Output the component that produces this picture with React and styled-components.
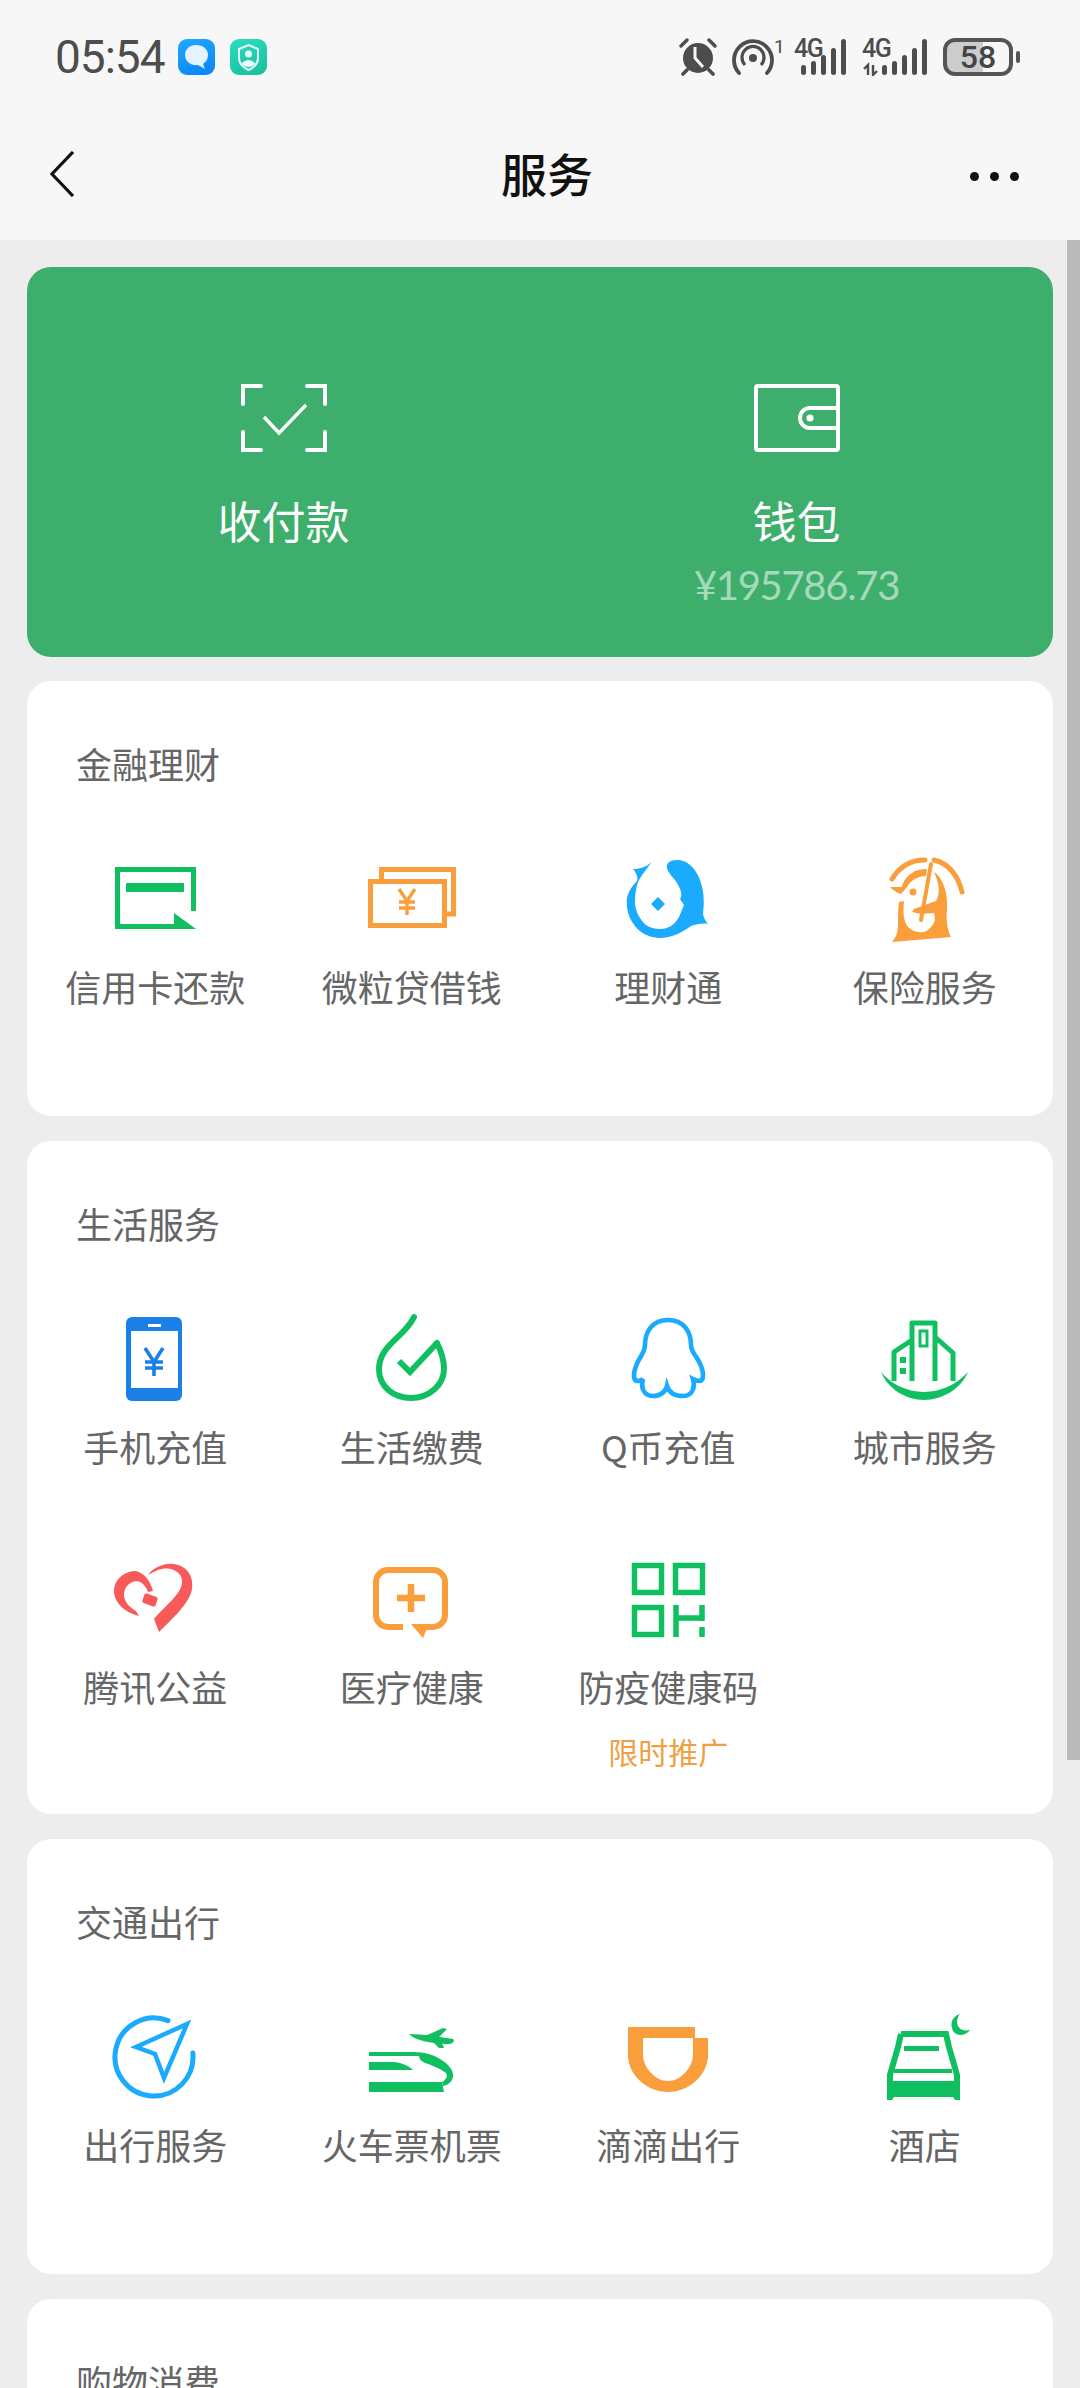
import React from "react";
import styled, { createGlobalStyle } from "styled-components";

const GREEN = "#0fbf60";
const ORANGE = "#f99e3a";
const BLUE = "#1aabff";

const CreditIcon = () => (
  <IconSvg viewBox="0 0 100 100">
    <path d="M89.5 62V20.5H13.5V77.5H70" fill="none" stroke={GREEN} strokeWidth="5" />
    <rect x="22" y="34" width="58" height="9" fill={GREEN} />
    <path d="M70 64L92 80H70Z" fill={GREEN} />
  </IconSvg>
);

const LoanIcon = () => (
  <IconSvg viewBox="0 0 100 100">
    <path d="M20.5 30V20.5H92.5V65H86" fill="none" stroke={ORANGE} strokeWidth="5" />
    <rect x="9.5" y="32.5" width="74" height="44" fill="none" stroke={ORANGE} strokeWidth="5" />
    <path d="M38 40L46 52L54 40M46 52V66M38 53H54M38 59H54" fill="none" stroke={ORANGE} strokeWidth="3.4" />
  </IconSvg>
);

const FishIcon = () => (
  <IconSvg viewBox="0 0 100 100">
    <path
      d="M34.7 13C28 19 22 20 16 20C20 25 21 28 20 32C14 38 9.7 45 9.7 53C9.7 74 25 89 43 89C56 89 67 82 74 77C80 75 86 74 91 75C88 71 86 68 86 64C90 40 80 11 60 11C53 11 49 14 50 19C51 24 56 28 60 34C65 42 65 48 63 50L67 56L62 68C57 77 50 80 43 80C35 80 29 77 26 73C21 67 18 60 18 53C18 45 19 39 21 33C25 25 30 20 34.7 13Z"
      fill={BLUE}
    />
    <path d="M41 48L48 55L41 62L34 55Z" fill={BLUE} />
  </IconSvg>
);

const InsuranceIcon = () => (
  <IconSvg viewBox="0 0 100 100">
    <path d="M18 30C26 17 38 11 51 11" fill="none" stroke={ORANGE} strokeWidth="5" strokeLinecap="round" />
    <path d="M60 11C74 14 84 26 88 43" fill="none" stroke={ORANGE} strokeWidth="5" strokeLinecap="round" />
    <path d="M16 38H28C29 32 33 27 38 24C42 21 47 20 53 20L52 27C44 27 37 31 33 38L27 45C23 44 19 41 16 38Z" fill={ORANGE} />
    <circle cx="39" cy="43" r="3.4" fill={ORANGE} />
    <path d="M57 15L47 71" stroke={ORANGE} strokeWidth="4" strokeLinecap="round" />
    <path
      d="M60 23C68 28 74 42 73 60C72 70 73 80 77 88L18 93C22 88 24 84 24 76C24 68 24 60 25 53L30 52C29 62 29 72 34 78C40 84 50 85 55 80C61 75 62 70 60 64L47 65L38 63L40 60L62 52C66 46 66 36 60 23Z"
      fill={ORANGE}
    />
  </IconSvg>
);

const PhoneIcon = () => (
  <IconSvg viewBox="0 0 100 100">
    <rect x="22" y="8" width="56" height="84" rx="6" fill="#1b7fe8" />
    <rect x="27" y="22" width="47" height="57" fill="#fff" />
    <rect x="44" y="15" width="13" height="3" fill="#fff" />
    <path d="M41 39L50 53L59 39M50 53V67M41 53H59M41 59H59" fill="none" stroke="#1b7fe8" strokeWidth="3.6" />
  </IconSvg>
);

const BillIcon = () => (
  <IconSvg viewBox="0 0 100 100">
    <path
      d="M53 8C44 28 18 36 18 60C18 78 33 89 50 89C68 89 83 76 83 60C83 50 80 42 76 34"
      fill="none"
      stroke={GREEN}
      strokeWidth="6"
      strokeLinecap="round"
    />
    <path d="M38 52L49 63L76 34" fill="none" stroke={GREEN} strokeWidth="6" />
  </IconSvg>
);

const PenguinIcon = () => (
  <IconSvg viewBox="0 0 100 100">
    <path
      d="M51 11C35 11 28 23 28 36C28 44 22 48 19 57C16 65 16 72 21 72C23 72 25 71 26 70C24 76 25 87 36 87C44 87 49 82 50 77C52 83 57 87 66 87C77 87 78 76 76 70C78 71 80 72 82 72C87 72 87 65 84 57C81 48 74 44 74 36C74 23 67 11 51 11Z"
      fill="none"
      stroke={BLUE}
      strokeWidth="4.6"
    />
  </IconSvg>
);

const CityIcon = () => (
  <IconSvg viewBox="0 0 100 100">
    <path d="M7 63C14 80 32 91 50 91C68 91 87 80 94 63C84 74 68 83 50 83C32 83 16 74 7 63Z" fill={GREEN} />
    <path d="M20 72V43L38 31M38 72V14H61V72M61 28L79 44V72" fill="none" stroke={GREEN} strokeWidth="5" strokeLinejoin="round" />
    <rect x="46" y="22" width="7" height="15" fill="none" stroke={GREEN} strokeWidth="3" />
    <rect x="26" y="48" width="6" height="6" fill={GREEN} />
    <rect x="26" y="59" width="6" height="6" fill={GREEN} />
  </IconSvg>
);

const HeartIcon = () => (
  <IconSvg viewBox="0 0 100 100">
    <path
      d="M44 26C50 18 60 14 70 15C82 17 90 26 88 40C86 54 68 70 55 83L50 70C60 58 76 46 78 35C80 24 68 18 58 20C52 21 48 24 44 26Z"
      fill="#f85a5a"
    />
    <path
      d="M49 42C46 30 38 22 30 22C18 23 10 32 10 42C10 54 22 64 35 67L32 62C24 58 19 50 20 44C21 36 28 32 33 32C38 33 42 37 44 43Z"
      fill="#f85a5a"
    />
    <rect x="39" y="46" width="14" height="10" rx="2" transform="rotate(20 46 51)" fill="#f85a5a" />
  </IconSvg>
);

const MedicalIcon = () => (
  <IconSvg viewBox="0 0 100 100">
    <path
      d="M42 78H27A12 12 0 0 1 15 66V33A12 12 0 0 1 27 21H72A12 12 0 0 1 84 33V66A12 12 0 0 1 72 78H66"
      fill="none"
      stroke={ORANGE}
      strokeWidth="6"
    />
    <path d="M50 75H68L62 89Z" fill={ORANGE} />
    <path d="M36 49H64M50 35V63" stroke={ORANGE} strokeWidth="6.5" />
  </IconSvg>
);

const HealthCodeIcon = () => (
  <IconSvg viewBox="0 0 100 100">
    <g fill="none" stroke={GREEN} strokeWidth="5.5">
      <rect x="17.5" y="16.5" width="27" height="27" />
      <rect x="58.5" y="16.5" width="27" height="27" />
      <rect x="17.5" y="58.5" width="27" height="27" />
      <path d="M59 56V88M85 56V72M59 69H85M85 78V88" />
    </g>
  </IconSvg>
);

const CompassIcon = () => (
  <IconSvg viewBox="0 0 100 100">
    <path d="M64 13.6A39 39 0 1 0 88.8 46" fill="none" stroke={BLUE} strokeWidth="5" strokeLinecap="round" />
    <path d="M83 17L32 40L51 47L60 71Z" fill="none" stroke={BLUE} strokeWidth="4.5" />
  </IconSvg>
);

const TrainIcon = () => (
  <IconSvg viewBox="0 0 100 100">
    <path d="M48 27C60 27 80 30 92 32C95 35 90 38 84 37C70 36 55 34 48 27Z" fill={GREEN} />
    <path d="M64 29L82 21L86 22L76 32ZM70 33L78 41L83 41L80 34Z" fill={GREEN} />
    <path
      d="M8 45H52C64 45 74 48 82 54C88 58 93 64 92 70C91 75 87 78 82 79L81 75C85 73 87 69 85 66C80 62 70 58 64 56C60 54 58 52 58 49H8Z"
      fill={GREEN}
    />
    <path d="M8 55H33C42 56 48 59 52 63H8Z" fill={GREEN} />
    <path d="M8 75H81L83 85H8Z" fill={GREEN} />
  </IconSvg>
);

const DidiIcon = () => (
  <IconSvg viewBox="0 0 100 100">
    <path
      fillRule="evenodd"
      d="M11 20H78V31H91V48C91 68 72 85 51 85C30 85 11 68 11 48ZM26 31V48C26 60 38 74 51 74C64 74 76 60 76 48V31Z"
      fill={ORANGE}
    />
  </IconSvg>
);

const HotelIcon = () => (
  <IconSvg viewBox="0 0 100 100">
    <path d="M86 7C80 14 83 26 96 23C91 30 80 30 78 21C76 14 80 9 86 7Z" fill={GREEN} />
    <path d="M27 27H72L75 40L83 68V90M27 27L24 40L16 68V90" fill="none" stroke={GREEN} strokeWidth="6" />
    <rect x="30" y="39" width="35" height="5" fill={GREEN} />
    <rect x="20" y="62" width="58" height="4" fill={GREEN} />
    <path d="M13 74H86V93H81L79 90H20L18 93H13Z" fill={GREEN} />
  </IconSvg>
);

const AlarmIcon = () => (
  <svg width="38" height="38" viewBox="0 0 38 38">
    <circle cx="19" cy="20" r="15" fill="#4d4d4d" />
    <path d="M2 8L8 2M36 8L30 2" stroke="#4d4d4d" strokeWidth="3.4" strokeLinecap="round" />
    <path d="M8 32L4 36M30 32L34 36" stroke="#4d4d4d" strokeWidth="3.6" strokeLinecap="round" />
    <path d="M16 9V20L24 29" fill="none" stroke="#f7f7f7" strokeWidth="3" />
  </svg>
);

const HotspotIcon = () => (
  <svg width="42" height="38" viewBox="0 0 42 38">
    <circle cx="21" cy="20" r="4" fill="#4d4d4d" />
    <path d="M13 27A11 11 0 1 1 29 27" fill="none" stroke="#4d4d4d" strokeWidth="3.2" />
    <path d="M7 35A19 19 0 1 1 35 35" fill="none" stroke="#4d4d4d" strokeWidth="3.8" strokeLinecap="round" />
  </svg>
);

const SignalBars = ({ arrows }) => (
  <svg width={arrows ? 66 : 46} height="37" viewBox={arrows ? "0 0 66 37" : "0 0 46 37"}>
    {arrows && (
      <path d="M2 30L6 26V36M6 36M11 26V36L15 32" fill="none" stroke="#4d4d4d" strokeWidth="2.4" />
    )}
    <g fill="#4d4d4d" transform={arrows ? "translate(20 0)" : undefined}>
      <rect x="0" y="26" width="5" height="10" rx="2.5" />
      <rect x="10" y="22" width="5" height="14" rx="2.5" />
      <rect x="20" y="16" width="5" height="20" rx="2.5" />
      <rect x="30" y="9" width="5" height="27" rx="2.5" />
      <rect x="40" y="0" width="5" height="36" rx="2.5" />
    </g>
  </svg>
);

const sections = [
  {
    title: "金融理财",
    items: [
      { label: "信用卡还款", Icon: CreditIcon },
      { label: "微粒贷借钱", Icon: LoanIcon },
      { label: "理财通", Icon: FishIcon },
      { label: "保险服务", Icon: InsuranceIcon },
    ],
  },
  {
    title: "生活服务",
    items: [
      { label: "手机充值", Icon: PhoneIcon },
      { label: "生活缴费", Icon: BillIcon },
      { label: "Q币充值", Icon: PenguinIcon },
      { label: "城市服务", Icon: CityIcon },
      { label: "腾讯公益", Icon: HeartIcon },
      { label: "医疗健康", Icon: MedicalIcon },
      { label: "防疫健康码", Icon: HealthCodeIcon, promo: "限时推广" },
    ],
  },
  {
    title: "交通出行",
    items: [
      { label: "出行服务", Icon: CompassIcon },
      { label: "火车票机票", Icon: TrainIcon },
      { label: "滴滴出行", Icon: DidiIcon },
      { label: "酒店", Icon: HotelIcon },
    ],
  },
  { title: "购物消费", items: [] },
];

const App = () => {
  return (
    <Page>
      <GlobalStyle />
      <Header>
        <StatusBar>
          <StatusGroup>
            <Clock>05:54</Clock>
            <AppBadge $bg="linear-gradient(160deg, #22a8ff, #0a84f5)">
              <svg width="37" height="36" viewBox="0 0 37 36">
                <path d="M18 6C25 6 30 10 30 16C30 20 28 23 25 25L27 30L20 26C12 27 7 22 7 16C7 10 12 6 18 6Z" fill="#e4f3ff" />
              </svg>
            </AppBadge>
            <AppBadge $bg="linear-gradient(160deg, #2ddcc0, #18bf9c)">
              <svg width="37" height="36" viewBox="0 0 37 36">
                <path d="M18.5 6L28 10V19C28 25 23 29 18.5 31C14 29 9 25 9 19V10Z" fill="none" stroke="#e8fffa" strokeWidth="2" />
                <circle cx="18.5" cy="15" r="3.5" fill="#e8fffa" />
                <path d="M12 25C13 20 24 20 25 25C22 29 15 29 12 25Z" fill="#e8fffa" />
              </svg>
            </AppBadge>
          </StatusGroup>
          <StatusGroup>
            <AlarmIcon />
            <Hotspot>
              <HotspotIcon />
              <HotspotCount>1</HotspotCount>
            </Hotspot>
            <SignalCell>
              <NetworkType>4G</NetworkType>
              <SignalBars />
            </SignalCell>
            <SignalCell>
              <NetworkType>4G</NetworkType>
              <SignalBars arrows />
            </SignalCell>
            <Battery $level={58}>58</Battery>
            <BatteryTip />
          </StatusGroup>
        </StatusBar>
        <NavBar>
          <BackButton>
            <svg width="26" height="46" viewBox="0 0 26 46">
              <path d="M24 1L3 23L24 45" fill="none" stroke="#111" strokeWidth="3.2" />
            </svg>
          </BackButton>
          <NavTitle>服务</NavTitle>
          <MoreButton>
            <Dot />
            <Dot />
            <Dot />
          </MoreButton>
        </NavBar>
      </Header>
      <Scrollbar />
      <Content>
        <HeroCard>
          <HeroItem>
            <svg width="86" height="68" viewBox="0 0 86 68">
              <path
                d="M20 2H2V20M66 2H84V20M20 66H2V48M66 66H84V48"
                fill="none"
                stroke="#fff"
                strokeWidth="4"
                strokeLinecap="round"
              />
              <path d="M23 33L38 49L65 21" fill="none" stroke="#fff" strokeWidth="3.4" />
            </svg>
            <HeroLabel>收付款</HeroLabel>
          </HeroItem>
          <HeroItem>
            <svg width="86" height="68" viewBox="0 0 86 68">
              <rect x="2" y="2" width="82" height="64" rx="2" fill="none" stroke="#fff" strokeWidth="4" />
              <path d="M84 24H56A10 10 0 0 0 56 44H84" fill="none" stroke="#fff" strokeWidth="4" />
              <circle cx="56" cy="34" r="3.6" fill="#fff" />
            </svg>
            <HeroLabel>钱包</HeroLabel>
            <Balance>¥195786.73</Balance>
          </HeroItem>
        </HeroCard>
        {sections.map((section) => (
          <SectionCard key={section.title}>
            <SectionTitle>{section.title}</SectionTitle>
            <ServiceGrid>
              {section.items.map(({ label, Icon, promo }) => (
                <ServiceItem key={label}>
                  <Icon />
                  <ServiceLabel>{label}</ServiceLabel>
                  {promo && <Promo>{promo}</Promo>}
                </ServiceItem>
              ))}
            </ServiceGrid>
          </SectionCard>
        ))}
      </Content>
    </Page>
  );
};

const GlobalStyle = createGlobalStyle`
  html, body {
    margin: 0;
    padding: 0;
    background: #ededed;
  }
  * {
    box-sizing: border-box;
  }
`;

const Page = styled.div`
  position: relative;
  width: 1080px;
  height: 2388px;
  overflow: hidden;
  background: #ededed;
  font-family: "Noto Sans CJK SC", "Noto Sans", sans-serif;
`;

const Header = styled.header`
  background: #f7f7f7;
  height: 240px;
`;

const StatusBar = styled.div`
  height: 115px;
  padding: 38px 60px 0 55px;
  display: flex;
  justify-content: space-between;
  align-items: flex-start;
`;

const StatusGroup = styled.div`
  display: flex;
  align-items: center;
  height: 38px;
`;

const Clock = styled.span`
  font-family: Roboto, sans-serif;
  font-size: 46px;
  line-height: 38px;
  letter-spacing: -1px;
  color: #4d4d4d;
  width: 123px;
`;

const AppBadge = styled.span`
  width: 37px;
  height: 36px;
  margin-right: 15px;
  border-radius: 9px;
  background: ${({ $bg }) => $bg};
  display: block;
`;

const Hotspot = styled.span`
  display: flex;
  align-items: flex-start;
  margin-left: 15px;
  width: 62px;
`;

const HotspotCount = styled.span`
  font-family: Roboto, sans-serif;
  font-size: 19px;
  line-height: 18px;
  color: #4d4d4d;
`;

const SignalCell = styled.span`
  position: relative;
  display: flex;
  justify-content: flex-end;
  margin-right: 15px;
  min-width: 53px;
`;

const NetworkType = styled.span`
  position: absolute;
  left: 0;
  top: 0;
  font-family: Roboto, sans-serif;
  font-weight: 500;
  font-size: 25px;
  line-height: 20px;
  letter-spacing: -1.5px;
  color: #4d4d4d;
`;

const Battery = styled.span`
  width: 70px;
  height: 38px;
  margin-left: 0;
  border: 4px solid #555;
  border-radius: 12px;
  background: linear-gradient(to right, #ccc ${({ $level }) => $level}%, transparent ${({ $level }) => $level}%);
  font-family: Roboto, sans-serif;
  font-size: 32px;
  font-weight: 500;
  line-height: 30px;
  text-align: center;
  color: #444;
`;

const BatteryTip = styled.span`
  width: 4px;
  height: 12px;
  margin-left: 3px;
  border-radius: 2px;
  background: #555;
`;

const NavBar = styled.nav`
  height: 125px;
  padding: 0 35px 5px 49px;
  display: grid;
  grid-template-columns: 1fr auto 1fr;
  align-items: center;
`;

const BackButton = styled.div`
  justify-self: start;
  height: 46px;
  margin-bottom: 3px;
`;

const NavTitle = styled.h1`
  margin: 0 0 6px;
  font-size: 46px;
  font-weight: 500;
  color: #111;
`;

const MoreButton = styled.div`
  justify-self: end;
  margin: 2px 26px 0 0;
  display: flex;
  gap: 11px;
`;

const Dot = styled.span`
  width: 9px;
  height: 9px;
  border-radius: 50%;
  background: #111;
`;

const Scrollbar = styled.div`
  position: absolute;
  top: 240px;
  right: 0;
  width: 13px;
  height: 1520px;
  background: #bbb;
`;

const Content = styled.main`
  padding: 27px 27px 0;
  display: flex;
  flex-direction: column;
  gap: 25px;
`;

const HeroCard = styled.section`
  height: 390px;
  margin-bottom: -1px;
  padding-top: 117px;
  border-radius: 24px;
  background: #3dae6c;
  display: grid;
  grid-template-columns: 1fr 1fr;
`;

const HeroItem = styled.div`
  display: flex;
  flex-direction: column;
  align-items: center;
`;

const HeroLabel = styled.div`
  margin-top: 43px;
  font-size: 44px;
  line-height: 50px;
  color: #fff;
`;

const Balance = styled.div`
  margin-top: 20px;
  font-family: Lato, sans-serif;
  font-size: 40px;
  line-height: 40px;
  letter-spacing: -1.3px;
  color: rgba(255, 255, 255, 0.55);
`;

const SectionCard = styled.section`
  flex: none;
  min-height: 435px;
  padding-bottom: 25px;
  border-radius: 24px;
  background: #fff;
`;

const SectionTitle = styled.h2`
  margin: 0 0 61px;
  padding: 57px 0 0 49px;
  font-size: 36px;
  font-weight: 400;
  line-height: 50px;
  color: #666;
`;

const ServiceGrid = styled.div`
  display: grid;
  grid-template-columns: repeat(4, 1fr);
  grid-auto-rows: 240px;
`;

const ServiceItem = styled.div`
  display: flex;
  flex-direction: column;
  align-items: center;
`;

const IconSvg = styled.svg`
  width: 100px;
  height: 100px;
  flex: none;
  margin-left: -2px;
`;

const ServiceLabel = styled.div`
  margin-top: 12px;
  font-size: 36px;
  line-height: 50px;
  color: #666;
  white-space: nowrap;
`;

const Promo = styled.div`
  margin-top: 20px;
  font-size: 30px;
  line-height: 40px;
  color: #f0a044;
`;

export default App;
